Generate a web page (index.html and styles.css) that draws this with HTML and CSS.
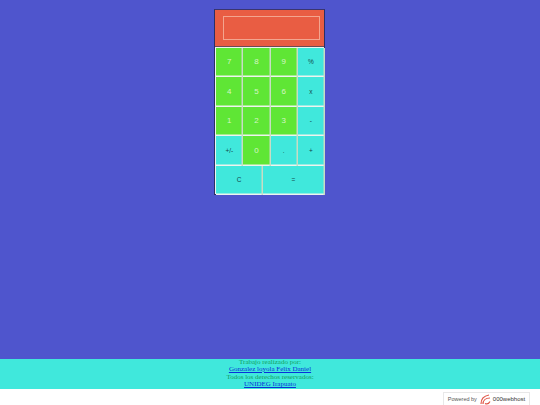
FILE: index.html
```html
<!DOCTYPE html>
<html lang="es">
<head>
<meta charset="utf-8">
<title>Calculadora</title>
<link rel="stylesheet" href="styles.css">
</head>
<body>
<main class="stage">
  <div class="calc">
    <div class="head"><div class="screen"></div></div>
    <div class="keys">
      <button class="key green">7</button><button class="key green">8</button><button class="key green">9</button><button class="key cyan">%</button>
      <button class="key green">4</button><button class="key green">5</button><button class="key green">6</button><button class="key cyan">x</button>
      <button class="key green">1</button><button class="key green">2</button><button class="key green">3</button><button class="key cyan">-</button>
      <button class="key cyan">+/-</button><button class="key green">0</button><button class="key cyan">.</button><button class="key cyan">+</button>
      <div class="lastrow"><button class="key cyan">C</button><button class="key cyan">=</button></div>
    </div>
  </div>
</main>
<footer class="foot">
  <div>Trabajo realizado por:</div>
  <div><a href="#">Gonzalez loyola Felix Daniel</a></div>
  <div>Todos los derechos reservados:</div>
  <div><a href="#">UNIDEG Irapuato</a></div>
</footer>
<div class="strip">
  <div class="badge">
    <span>Powered by</span>
    <svg class="logo" width="12" height="11" viewBox="0 0 12 11"><path d="M2 10C2 6 4 2 10 1" fill="none" stroke="#e0584a" stroke-width="1.2"/><path d="M4 10C4 7 6 4 11 4" fill="none" stroke="#e0584a" stroke-width="1.2"/><path d="M6 9.500C8 10.500 10 9.500 11 7.500" fill="none" stroke="#e0584a" stroke-width="1.200"/></svg>
    <span class="brand">000webhost</span>
  </div>
</div>
</body>
</html>
```
FILE: styles.css
```css
html, body { margin: 0; padding: 0; height: 100%; }
body {
  width: 540px;
  height: 405px;
  overflow: hidden;
  display: flex;
  flex-direction: column;
  background: #fff;
  font-family: "Liberation Serif", serif;
}
.stage {
  height: 358.500px;
  background: #4f55cd;
  display: flex;
  justify-content: center;
  padding: 9px 1px 0 0;
  box-sizing: border-box;
}
.calc {
  width: 111.500px;
  height: 186px;
  box-sizing: border-box;
  border: 1px solid #2c2f66;
  border-top-color: #3a3570;
  background: #eef3f0;
  display: flex;
  flex-direction: column;
}
.head {
  height: 37px;
  background: #e95d43;
  padding: 6px 4px 6px 8px;
  box-sizing: border-box;
  border-bottom: 1px solid #6b4a55;
}
.screen {
  height: 100%;
  box-sizing: border-box;
  border: 1px solid #f3a58f;
}
.keys {
  flex: 1;
  display: grid;
  grid-template-columns: repeat(4, 27.200px);
  grid-auto-rows: 29.500px;
  padding: 0.500px 0 0 1.500px;
  min-height: 0;
}
.key {
  margin: 0;
  padding: 0 1px 1px 0;
  border: 0;
  font-family: "Liberation Sans", sans-serif;
  font-size: 6.500px;
  box-shadow: inset -1.500px 0 0 #c8dcc4, inset 0 -1.500px 0 #eef3ee;
}
.green {
  background: #5fe635;
  color: #d6f5c5;
  font-size: 8px;
}
.cyan {
  background: #40e8dc;
  color: #12484c;
}
.lastrow {
  grid-column: 1 / -1;
  display: grid;
  grid-template-columns: 46.500px 62.300px;
}
.foot {
  height: 30px;
  background: #40e8dc;
  color: #10a060;
  text-align: center;
  font-size: 7px;
  line-height: 7.500px;
  box-sizing: border-box;
}
.foot a { color: #0a30d8; text-decoration: underline; }
.strip {
  flex: 1;
  display: flex;
  justify-content: flex-end;
  align-items: flex-end;
  padding-right: 10px;
}
.badge {
  width: 87px;
  height: 13px;
  box-sizing: border-box;
  border: 1px solid #e8e8e8;
  border-bottom: 0;
  display: flex;
  align-items: center;
  justify-content: center;
  gap: 2px;
  font-family: "Liberation Sans", sans-serif;
  font-size: 5.500px;
  color: #555;
}
.brand { color: #333; font-size: 6px; }
```
